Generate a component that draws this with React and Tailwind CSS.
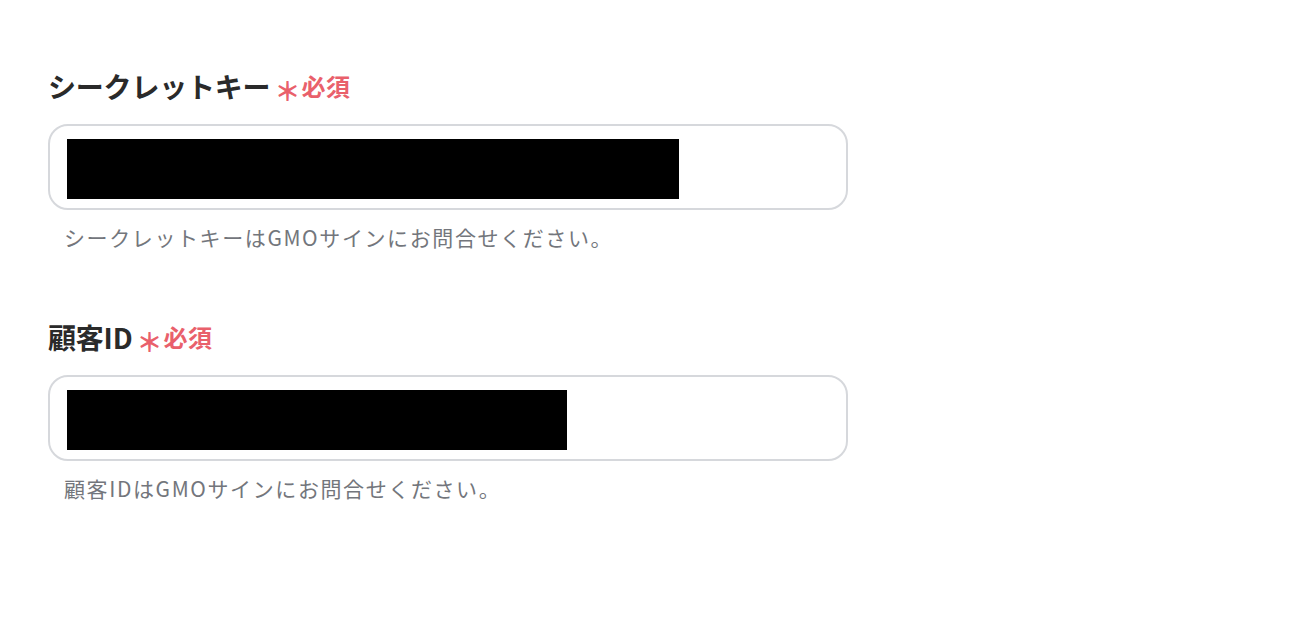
import React from 'react';

const font = { fontFamily: '"Noto Sans CJK JP", "Liberation Sans", sans-serif' };

const Field = ({ label, help, barWidth, labelGap, top }) => (
    <div className={top}>
        <div className="flex items-center h-[36px]">
            <span className="text-[28px] font-bold text-[#2a2a2a] tracking-[-0.2px]">{label}</span>
            <span className="ml-[4px] text-[26px] font-bold text-[#e9606b] mt-[8px] leading-none">＊</span>
            <span className="ml-[1px] text-[24px] font-bold text-[#e9606b] tracking-[0.5px]">必須</span>
        </div>
        <div className={`${labelGap} w-[800px] h-[86px] border-2 border-[#d6d8dc] rounded-[20px] bg-white pl-[17px] pt-[13px]`}>
            <div className={`${barWidth} h-[60px] bg-black`} />
        </div>
        <p className="mt-[13px] pl-[16px] h-[28px] leading-[28px] text-[21px] text-[#73767c] tracking-[1.6px]">{help}</p>
    </div>
);

export default function App() {
    return (
        <div className="min-h-screen bg-white pl-[48px] pt-[68px]" style={font}>
            <Field
                label="シークレットキー"
                help="シークレットキーはGMOサインにお問合せください。"
                barWidth="w-[612px]"
                labelGap="mt-[20px]"
                top=""
            />
            <Field
                label="顧客ID"
                help="顧客IDはGMOサインにお問合せください。"
                barWidth="w-[500px]"
                labelGap="mt-[20px]"
                top="mt-[68px]"
            />
        </div>
    );
}
